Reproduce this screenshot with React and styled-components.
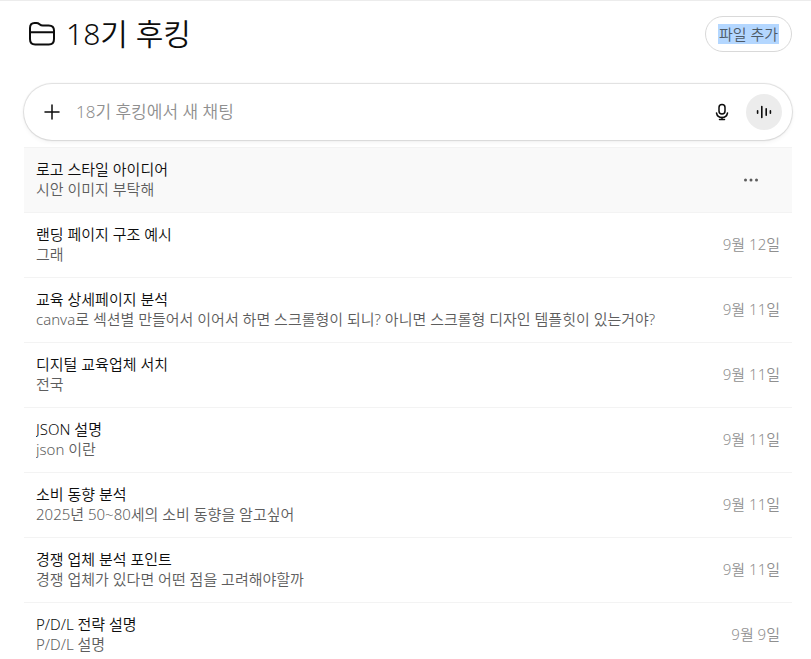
import React from "react";
import styled, { createGlobalStyle } from "styled-components";

const GlobalStyle = createGlobalStyle`
  *, *::before, *::after { box-sizing: border-box; }
  body {
    margin: 0;
    background: #fff;
    color: #0d0d0d;
    font-family: "Noto Sans", "Noto Sans CJK KR", sans-serif;
    font-size: 15px;
    font-weight: 350;
    line-height: 20px;
  }
  button, input { font: inherit; color: inherit; }
`;

const Page = styled.main`
  border-top: 1px solid #ececec;
  padding: 15px 19px 0 24px;
`;

const Header = styled.header`
  display: flex;
  align-items: center;
  justify-content: space-between;
  padding-left: 4px;
`;

const Heading = styled.div`
  display: flex;
  align-items: center;
  gap: 10px;
`;

const Title = styled.h1`
  margin: 0;
  font-size: 30px;
  font-weight: 350;
  line-height: 36px;
`;

const AddFileButton = styled.button`
  height: 36px;
  padding: 0 12px;
  border: 1px solid #d9d9d9;
  border-radius: 18px;
  background: #fff;
  color: #4d5a66;
  line-height: 20px;
  cursor: pointer;
`;

const Selected = styled.span`
  display: block;
  padding: 0 1px;
  background: #b4d7ff;
`;

const Composer = styled.form`
  display: flex;
  align-items: center;
  height: 56px;
  margin: 32px 0 7px;
  padding: 0 10px;
  border-radius: 28px;
  background: #fff;
  box-shadow: 0 0 1px 1px rgba(0, 0, 0, 0.12), 0 2px 5px rgba(0, 0, 0, 0.06);
`;

const IconButton = styled.button`
  display: flex;
  flex: none;
  align-items: center;
  justify-content: center;
  width: 36px;
  height: 36px;
  padding: 0;
  border: 0;
  border-radius: 50%;
  background: ${({ $filled }) => ($filled ? "#ececec" : "transparent")};
  color: ${({ $muted }) => ($muted ? "#5d5d5d" : "#0d0d0d")};
  cursor: pointer;
`;

const ChatInput = styled.input`
  flex: 1;
  min-width: 0;
  padding: 0 6px;
  border: 0;
  outline: 0;
  background: transparent;
  font-size: 17px;
  line-height: 24px;
  &::placeholder { color: #8f8f8f; opacity: 1; }
`;

const Tools = styled.div`
  display: flex;
  gap: 6px;
`;

const ChatList = styled.ul`
  margin: 0;
  padding: 0;
  list-style: none;
`;

const ChatRow = styled.li`
  display: flex;
  align-items: center;
  gap: 12px;
  padding: 11px 12px 13px;
  border-top: 1px solid #f3f3f3;
  background: ${({ $active }) => ($active ? "#f9f9f9" : "#fff")};
`;

const ChatLink = styled.a`
  flex: 1;
  min-width: 0;
  color: inherit;
  text-decoration: none;
`;

const Line = styled.span`
  display: block;
  overflow: hidden;
  white-space: nowrap;
  text-overflow: ellipsis;
`;

const ChatName = styled(Line)`
  color: #0d0d0d;
`;

const Preview = styled(Line)`
  color: #5d5d5d;
`;

const ChatDate = styled.time`
  color: #8f8f8f;
`;

const MoreSlot = styled.div`
  display: flex;
  height: 20px;
  align-items: center;
  padding: 2px 11px 0 0;
`;

const FolderIcon = () => (
  <svg width="28" height="28" viewBox="0 0 28 28" fill="none" stroke="currentColor" strokeWidth="2" strokeLinejoin="round" aria-hidden="true">
    <path d="M2 8C2 4.400 3.400 3 6.500 3h1.800c1.500 0 2.300.4 3.200 1.200 1 .9 1.800 1.400 3.200 1.400h6c3.800 0 5.300 1.400 5.300 5v8.400c0 4-1.500 5.500-5.200 5.500H7.200C3.500 24.500 2 23 2 19zM2 12.200h24" />
  </svg>
);

const PlusIcon = () => (
  <svg width="20" height="20" viewBox="0 0 20 20" fill="none" stroke="currentColor" strokeWidth="1.500" strokeLinecap="round" aria-hidden="true">
    <path d="M10 3v14M3 10h14" />
  </svg>
);

const MicIcon = () => (
  <svg width="20" height="20" viewBox="0 0 20 20" fill="none" stroke="currentColor" strokeWidth="1.500" strokeLinecap="round" aria-hidden="true">
    <rect x="7" y="2.500" width="6" height="9.600" rx="3" />
    <path d="M4.500 11a5.600 5.600 0 0 0 11 0M10 15.200v2.300M7.500 17.600h5" />
  </svg>
);

const VoiceIcon = () => (
  <svg width="20" height="20" viewBox="0 0 20 20" fill="none" stroke="currentColor" strokeWidth="1.600" strokeLinecap="round" aria-hidden="true">
    <path d="M3.600 8.800v2.400M7.800 4.500v11M12.200 6.800v6.400M16.400 8.800v2.400" />
  </svg>
);

const MoreIcon = () => (
  <svg width="20" height="20" viewBox="0 0 20 20" fill="currentColor" aria-hidden="true">
    <circle cx="4.500" cy="10" r="1.500" />
    <circle cx="10" cy="10" r="1.500" />
    <circle cx="15.500" cy="10" r="1.500" />
  </svg>
);

const chats = [
  { name: "로고 스타일 아이디어", preview: "시안 이미지 부탁해", active: true },
  { name: "랜딩 페이지 구조 예시", preview: "그래", date: "9월 12일", iso: "09-12" },
  { name: "교육 상세페이지 분석", preview: "canva로 섹션별 만들어서 이어서 하면 스크롤형이 되니? 아니면 스크롤형 디자인 템플힛이 있는거야?", date: "9월 11일", iso: "09-11" },
  { name: "디지털 교육업체 서치", preview: "전국", date: "9월 11일", iso: "09-11" },
  { name: "JSON 설명", preview: "json 이란", date: "9월 11일", iso: "09-11" },
  { name: "소비 동향 분석", preview: "2025년 50~80세의 소비 동향을 알고싶어", date: "9월 11일", iso: "09-11" },
  { name: "경쟁 업체 분석 포인트", preview: "경쟁 업체가 있다면 어떤 점을 고려해야할까", date: "9월 11일", iso: "09-11" },
  { name: "P/D/L 전략 설명", preview: "P/D/L 설명", date: "9월 9일", iso: "09-09" },
];

export default function App() {
  return (
    <>
      <GlobalStyle />
      <Page>
        <Header>
          <Heading>
            <FolderIcon />
            <Title>18기 후킹</Title>
          </Heading>
          <AddFileButton type="button">
            <Selected>파일 추가</Selected>
          </AddFileButton>
        </Header>
        <Composer onSubmit={(event) => event.preventDefault()}>
          <IconButton type="button" aria-label="첨부">
            <PlusIcon />
          </IconButton>
          <ChatInput type="text" aria-label="새 채팅" placeholder="18기 후킹에서 새 채팅" />
          <Tools>
            <IconButton type="button" aria-label="받아쓰기">
              <MicIcon />
            </IconButton>
            <IconButton type="button" aria-label="음성 모드" $filled>
              <VoiceIcon />
            </IconButton>
          </Tools>
        </Composer>
        <ChatList>
          {chats.map((chat) => (
            <ChatRow key={chat.name} $active={chat.active}>
              <ChatLink href="#">
                <ChatName>{chat.name}</ChatName>
                <Preview>{chat.preview}</Preview>
              </ChatLink>
              {chat.active ? (
                <MoreSlot>
                  <IconButton type="button" aria-label="더 보기" $muted>
                    <MoreIcon />
                  </IconButton>
                </MoreSlot>
              ) : (
                <ChatDate dateTime={chat.iso}>{chat.date}</ChatDate>
              )}
            </ChatRow>
          ))}
        </ChatList>
      </Page>
    </>
  );
}
